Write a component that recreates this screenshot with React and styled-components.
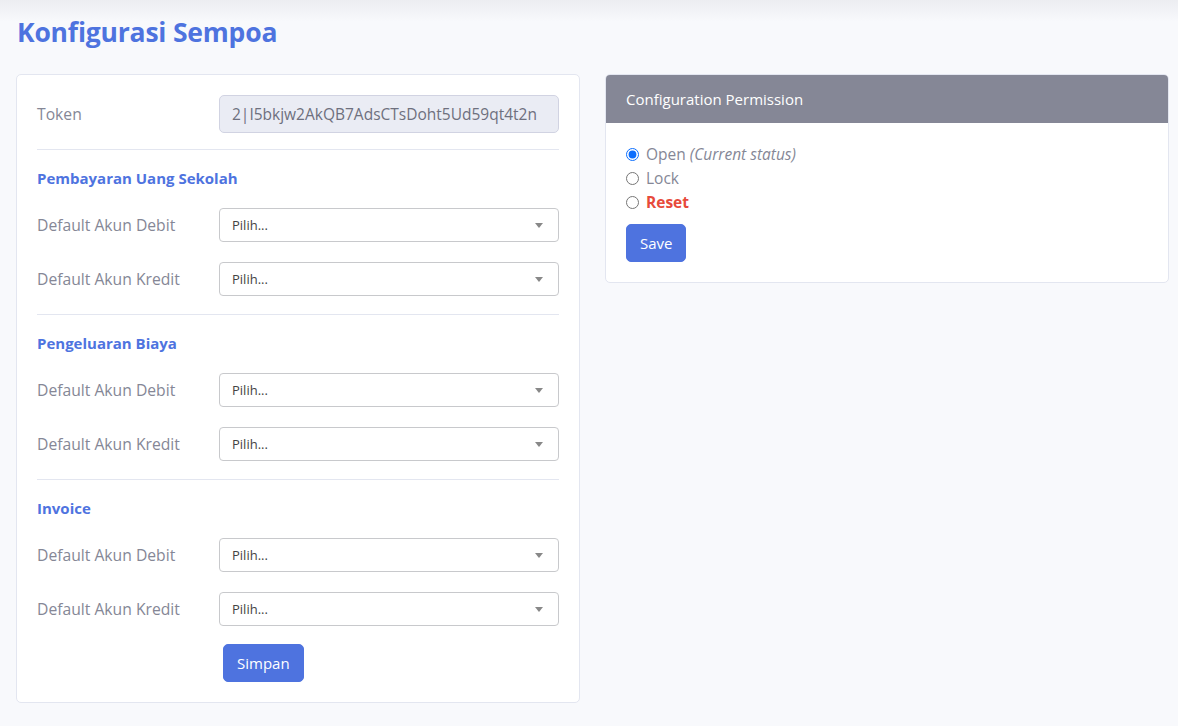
import React from "react";
import styled, { createGlobalStyle } from "styled-components";

const GlobalStyle = createGlobalStyle`
    html, body {
        margin: 0;
        padding: 0;
    }
    body {
        background: linear-gradient(to bottom, #ecedf1 0px, #f8f9fc 22px) #f8f9fc;
        font-family: "Open Sans", "Noto Sans", sans-serif;
        color: #858796;
        min-height: 726px;
    }
`;

const Page = styled.div`
    padding: 14px 10px 0 16px;
`;

const Title = styled.h1`
    margin: 0 0 24px 1px;
    font-size: 26.5px;
    font-weight: 700;
    line-height: 36px;
    color: #4e73df;
    letter-spacing: -0.2px;
`;

const Columns = styled.div`
    display: grid;
    grid-template-columns: 564px 564px;
    gap: 25px;
    align-items: start;
`;

const Card = styled.div`
    background: #fff;
    border: 1px solid #e3e6f0;
    border-radius: 5px;
    overflow: hidden;
`;

const CardHeader = styled.div`
    background: #858796;
    color: #fff;
    font-size: 15px;
    padding: 0 20px;
    height: 48px;
    display: flex;
    align-items: center;
`;

const CardBody = styled.div`
    padding: 20px;
`;

const FormRow = styled.div`
    display: grid;
    grid-template-columns: 158px 1fr;
    gap: 24px;
    align-items: center;
    margin-bottom: ${(p) => p.$mb ?? 20}px;
`;

const Label = styled.label`
    font-size: 15.7px;
    color: #858796;
`;

const TokenInput = styled.div`
    height: 38px;
    box-sizing: border-box;
    border: 1px solid #d1d3e2;
    border-radius: 5px;
    background: #eaecf4;
    color: #6e707e;
    font-size: 15.5px;
    padding: 0 12px;
    display: flex;
    align-items: center;
    white-space: nowrap;
    overflow: hidden;
`;

const Divider = styled.hr`
    border: 0;
    border-top: 1px solid #e3e6f0;
    margin: 16px 0 18px;
`;

const SectionTitle = styled.div`
    color: #4e73df;
    font-weight: 700;
    font-size: 15px;
    line-height: 20px;
    margin-bottom: 20px;
`;

const SelectBox = styled.div`
    height: 34px;
    box-sizing: border-box;
    border: 1px solid #c8c9cc;
    border-radius: 4px;
    background: #fff;
    display: flex;
    align-items: center;
    justify-content: space-between;
    padding: 0 12px;
    font-size: 13px;
    color: #444;
`;

const Caret = styled.span`
    width: 0;
    height: 0;
    border-left: 4px solid transparent;
    border-right: 4px solid transparent;
    border-top: 5px solid #888;
    margin-right: 3px;
`;

const Button = styled.button`
    background: #4e73df;
    border: 1px solid #4e73df;
    color: #fff;
    border-radius: 5px;
    font-family: inherit;
    font-size: 15px;
    height: 38px;
    padding: 0 13px;
    cursor: pointer;
`;

const ButtonRow = styled.div`
    padding-left: 186px;
`;

const RadioList = styled.div`
    display: flex;
    flex-direction: column;
    margin: -1px 0 10px;
`;

const RadioLine = styled.label`
    display: flex;
    align-items: center;
    height: 24px;
    font-size: 15.5px;
    color: ${(p) => (p.$danger ? "#e74a3b" : "#858796")};
    font-weight: ${(p) => (p.$danger ? 700 : 400)};

    input {
        margin: 0 7px 0 0;
        width: 13px;
        height: 13px;
        accent-color: #0d6efd;
    }

    em {
        margin-left: 4px;
    }
`;

function SelectField({ label, last }) {
    return (
        <FormRow $mb={last ? 18 : 20}>
            <Label>{label}</Label>
            <SelectBox>
                <span>Pilih...</span>
                <Caret />
            </SelectBox>
        </FormRow>
    );
}

const sections = ["Pembayaran Uang Sekolah", "Pengeluaran Biaya", "Invoice"];

export default function App() {
    return (
        <>
            <GlobalStyle />
            <Page>
                <Title>Konfigurasi Sempoa</Title>
                <Columns>
                    <Card>
                        <CardBody>
                            <FormRow $mb={0}>
                                <Label>Token</Label>
                                <TokenInput>2|I5bkjw2AkQB7AdsCTsDoht5Ud59qt4t2n</TokenInput>
                            </FormRow>
                            {sections.map((s) => (
                                <div key={s}>
                                    <Divider />
                                    <SectionTitle>{s}</SectionTitle>
                                    <SelectField label="Default Akun Debit" />
                                    <SelectField label="Default Akun Kredit" last />
                                </div>
                            ))}
                            <ButtonRow>
                                <Button>Simpan</Button>
                            </ButtonRow>
                        </CardBody>
                    </Card>
                    <Card>
                        <CardHeader>Configuration Permission</CardHeader>
                        <CardBody>
                            <RadioList>
                                <RadioLine>
                                    <input type="radio" name="perm" defaultChecked />
                                    Open <em>(Current status)</em>
                                </RadioLine>
                                <RadioLine>
                                    <input type="radio" name="perm" />
                                    Lock
                                </RadioLine>
                                <RadioLine $danger>
                                    <input type="radio" name="perm" />
                                    Reset
                                </RadioLine>
                            </RadioList>
                            <Button>Save</Button>
                        </CardBody>
                    </Card>
                </Columns>
            </Page>
        </>
    );
}
